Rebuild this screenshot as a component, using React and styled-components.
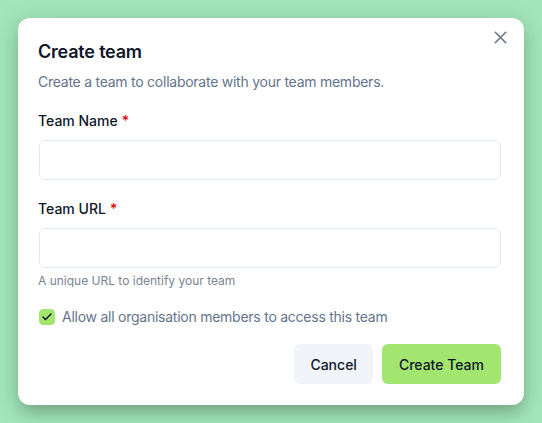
import React, { useState } from "react";
import styled, { createGlobalStyle } from "styled-components";

const GlobalStyle = createGlobalStyle`
  html, body {
    margin: 0;
    padding: 0;
    background: #a2e6b9;
    font-family: Inter, "Noto Sans", sans-serif;
  }
  * { box-sizing: border-box; }
`;

const Backdrop = styled.div`
  width: 542px;
  height: 423px;
  padding: 18px;
  background: #a2e6b9;
`;

const Dialog = styled.div`
  position: relative;
  width: 506px;
  background: #ffffff;
  border-radius: 12px;
  padding: 22px 23px 21px 20px;
  box-shadow: 0 10px 15px -3px rgba(0, 0, 0, 0.18), 0 4px 24px 2px rgba(0, 0, 0, 0.14);
  display: flex;
  flex-direction: column;
`;

const Close = styled.button`
  position: absolute;
  top: 9px;
  right: 13px;
  width: 21px;
  height: 21px;
  padding: 0;
  border: none;
  background: none;
  color: #64748b;
  display: flex;
  align-items: center;
  justify-content: center;
`;

const Title = styled.h2`
  margin: 0;
  font-size: 18px;
  line-height: 24px;
  font-weight: 600;
  color: #0f172a;
  letter-spacing: -0.2px;
`;

const Description = styled.p`
  margin: 8px 0 0;
  font-size: 14px;
  line-height: 20px;
  color: #64748b;
  letter-spacing: -0.25px;
`;

const Field = styled.div`
  display: flex;
  flex-direction: column;
  margin-top: ${(p) => p.$top}px;
`;

const Label = styled.label`
  font-size: 14px;
  line-height: 20px;
  font-weight: 500;
  color: #0f172a;
`;

const Required = styled.span`
  color: #ef0000;
  margin-left: 4px;
`;

const Input = styled.input`
  margin-top: 9px;
  height: 40px;
  width: 462px;
  margin-left: 1px;
  border: 1px solid #e2e8f0;
  border-radius: 6px;
  padding: 8px 12px;
  font-size: 14px;
  font-family: inherit;
  background: #fff;
  outline: none;
`;

const Help = styled.p`
  margin: 5px 0 0;
  font-size: 12px;
  line-height: 16px;
  color: #7b8494;
`;

const CheckRow = styled.label`
  display: flex;
  align-items: center;
  gap: 7px;
  margin-top: 18px;
  font-size: 14px;
  line-height: 20px;
  color: #64748b;
  letter-spacing: -0.25px;
`;

const Box = styled.span`
  width: 16px;
  height: 16px;
  margin-left: 1px;
  border-radius: 4px;
  background: ${(p) => (p.$checked ? "#a3e66f" : "#fff")};
  border: 1px solid ${(p) => (p.$checked ? "#a3e66f" : "#cbd5e1")};
  display: flex;
  align-items: center;
  justify-content: center;
  color: #0f172a;
`;

const Footer = styled.div`
  display: flex;
  justify-content: flex-end;
  gap: 9px;
  margin-top: 17px;
`;

const Button = styled.button`
  height: 40px;
  padding: 0 ${(p) => (p.$primary ? 17 : 16)}px;
  border: none;
  border-radius: 6px;
  font-family: inherit;
  font-size: 14px;
  font-weight: 500;
  color: #0f172a;
  background: ${(p) => (p.$primary ? "#a3e66f" : "#f1f5f9")};
  cursor: pointer;
`;

export default function App() {
  const [checked, setChecked] = useState(true);
  return (
    <>
      <GlobalStyle />
      <Backdrop>
        <Dialog>
          <Close aria-label="Close">
            <svg width="21" height="21" viewBox="0 0 24 24" fill="none" stroke="currentColor" strokeWidth="1.8" strokeLinecap="round">
              <path d="M18 6 6 18M6 6l12 12" />
            </svg>
          </Close>
          <Title>Create team</Title>
          <Description>Create a team to collaborate with your team members.</Description>
          <Field $top={19}>
            <Label>
              Team Name<Required>*</Required>
            </Label>
            <Input type="text" />
          </Field>
          <Field $top={19}>
            <Label>
              Team URL<Required>*</Required>
            </Label>
            <Input type="text" />
            <Help>A unique URL to identify your team</Help>
          </Field>
          <CheckRow onClick={() => setChecked(!checked)}>
            <Box $checked={checked}>
              {checked && (
                <svg width="12" height="12" viewBox="0 0 24 24" fill="none" stroke="currentColor" strokeWidth="3" strokeLinecap="round" strokeLinejoin="round">
                  <path d="M20 6 9 17l-5-5" />
                </svg>
              )}
            </Box>
            Allow all organisation members to access this team
          </CheckRow>
          <Footer>
            <Button>Cancel</Button>
            <Button $primary>Create Team</Button>
          </Footer>
        </Dialog>
      </Backdrop>
    </>
  );
}
